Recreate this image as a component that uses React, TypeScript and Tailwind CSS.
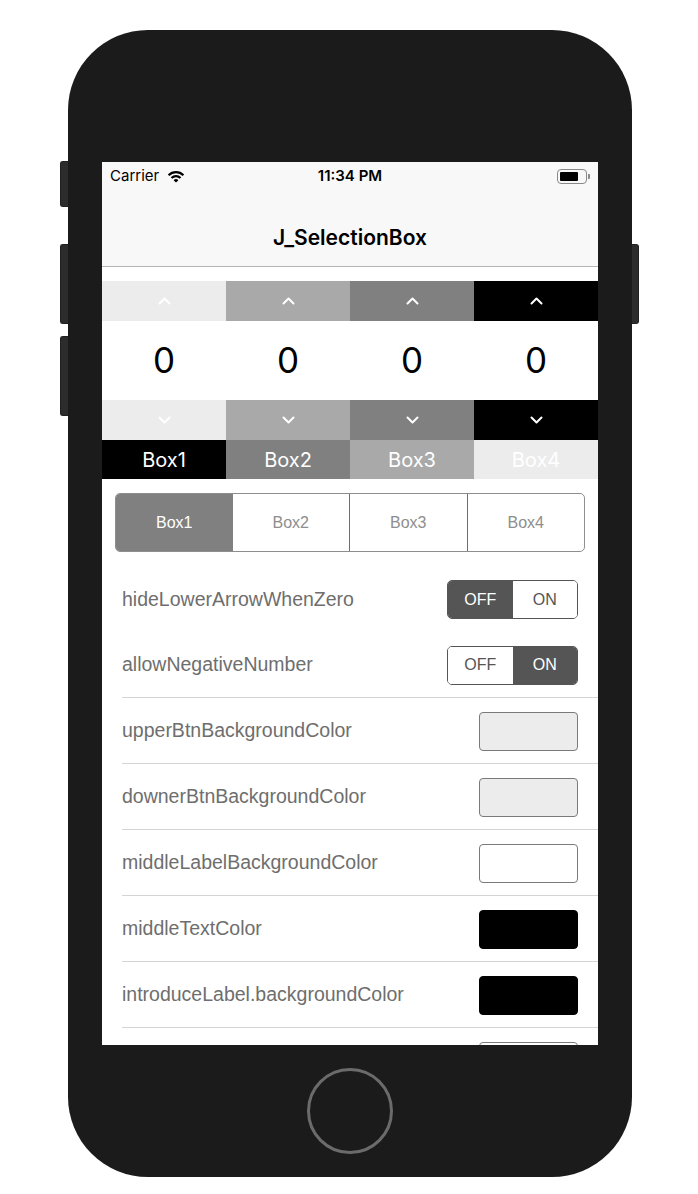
import React from "react";

const cols = [
  { arrow: "bg-[#ececec]", label: "bg-[#000000]" },
  { arrow: "bg-[#a9a9a9]", label: "bg-[#808080]" },
  { arrow: "bg-[#808080]", label: "bg-[#a9a9a9]" },
  { arrow: "bg-[#000000]", label: "bg-[#ececec]" },
];

function Chevron({ up }: { up: boolean }) {
  return (
    <svg width="13" height="8" viewBox="0 0 13 8" fill="none">
      <polyline
        points={up ? "1.5,6.5 6.5,1.5 11.5,6.5" : "1.5,1.5 6.5,6.5 11.5,1.5"}
        stroke="white"
        strokeWidth="2"
        strokeLinecap="round"
        strokeLinejoin="round"
      />
    </svg>
  );
}

function Wifi() {
  return (
    <svg width="18" height="13" viewBox="0 0 18 13">
      <path d="M1.6 5.2 A10.4 10.4 0 0 1 16.4 5.2" stroke="black" strokeWidth="2.2" fill="none" />
      <path d="M4.5 8 A6.4 6.4 0 0 1 13.5 8" stroke="black" strokeWidth="2.2" fill="none" />
      <path d="M9 12.6 L6.6 10.2 A3.4 3.4 0 0 1 11.4 10.2 Z" fill="black" />
    </svg>
  );
}

function Battery() {
  return (
    <div className="flex items-center">
      <div className="w-[30px] h-[15px] rounded-[4px] border border-[#8a8a8a] p-[2px]">
        <div className="w-[18px] h-full bg-black rounded-[1px]" />
      </div>
      <div className="w-[2px] h-[5px] bg-[#8a8a8a] rounded-r-[1px] ml-[1px]" />
    </div>
  );
}

function Toggle({ on }: { on: boolean }) {
  return (
    <div className="w-[131px] h-[39px] rounded-[5px] border border-[#555555] flex overflow-hidden font-['Liberation_Sans',sans-serif] text-[16px]">
      <div className={`flex-1 flex items-center justify-center ${!on ? "bg-[#555555] text-white" : "bg-white text-[#555555]"}`}>OFF</div>
      <div className={`flex-1 flex items-center justify-center ${on ? "bg-[#555555] text-white" : "bg-white text-[#555555]"}`}>ON</div>
    </div>
  );
}

const colorRows = [
  { label: "upperBtnBackgroundColor", sw: "bg-[#ececec] border-[#7a7a7a]" },
  { label: "downerBtnBackgroundColor", sw: "bg-[#ececec] border-[#7a7a7a]" },
  { label: "middleLabelBackgroundColor", sw: "bg-white border-[#7a7a7a]" },
  { label: "middleTextColor", sw: "bg-black border-black" },
  { label: "introduceLabel.backgroundColor", sw: "bg-black border-black" },
  { label: "", sw: "bg-white border-[#7a7a7a]" },
];

export default function App() {
  return (
    <div className="w-[698px] h-[1194px] bg-white pt-[30px] pl-[68px]">
      <div className="relative w-[564px] h-[1147px] rounded-[80px] bg-[#1b1b1b] flex flex-col items-center pt-[132px]">
        <div className="absolute left-[-8px] top-[131px] w-[8px] h-[46px] rounded-l-[3px] bg-[#2c2c2c] border border-r-0 border-[#202020]" />
        <div className="absolute left-[-8px] top-[214px] w-[8px] h-[80px] rounded-l-[3px] bg-[#2c2c2c] border border-r-0 border-[#202020]" />
        <div className="absolute left-[-8px] top-[306px] w-[8px] h-[80px] rounded-l-[3px] bg-[#2c2c2c] border border-r-0 border-[#202020]" />
        <div className="absolute right-[-7px] top-[214px] w-[7px] h-[80px] rounded-r-[3px] bg-[#2c2c2c] border border-l-0 border-[#202020]" />

        <div className="w-[496px] h-[883px] bg-white overflow-hidden flex flex-col">
          {/* nav */}
          <div className="h-[105px] bg-[#f8f8f8] border-b border-[#b4b4b4] flex flex-col shrink-0">
            <div className="h-[28px] flex items-center px-[8px] font-['Inter',sans-serif] text-[15px] text-black relative">
              <div className="flex items-center gap-[8px] w-[160px]">
                <span>Carrier</span>
                <Wifi />
              </div>
              <div className="flex-1 text-center font-semibold">11:34 PM</div>
              <div className="w-[160px] flex justify-end">
                <Battery />
              </div>
            </div>
            <div className="h-[76px] pt-[19px] flex items-center justify-center font-['Inter',sans-serif] font-semibold text-[21px] text-black">
              J_SelectionBox
            </div>
          </div>

          {/* boxes */}
          <div className="mt-[14px] grid grid-cols-4 shrink-0">
            {cols.map((c, i) => (
              <div key={i} className="flex flex-col">
                <div className={`h-[40px] flex items-center justify-center ${c.arrow}`}>
                  <Chevron up />
                </div>
                <div className="h-[79px] flex items-center justify-center bg-white font-['Inter',sans-serif] text-[35px] text-black">
                  0
                </div>
                <div className={`h-[40px] flex items-center justify-center ${c.arrow}`}>
                  <Chevron up={false} />
                </div>
                <div className={`h-[39px] flex items-center justify-center text-white font-['Inter',sans-serif] text-[20px] ${c.label}`}>
                  Box{i + 1}
                </div>
              </div>
            ))}
          </div>

          {/* segmented */}
          <div className="mt-[14px] mx-[13px] h-[59px] rounded-[5px] border border-[#8e8e8e] flex overflow-hidden shrink-0 font-['Liberation_Sans',sans-serif] text-[16px]">
            <div className="flex-1 flex items-center justify-center bg-[#808080] text-white">Box1</div>
            <div className="flex-1 flex items-center justify-center text-[#8e8e8e]">Box2</div>
            <div className="flex-1 flex items-center justify-center text-[#8e8e8e] border-l border-[#6e6e6e]">Box3</div>
            <div className="flex-1 flex items-center justify-center text-[#8e8e8e] border-l border-[#6e6e6e]">Box4</div>
          </div>

          {/* settings */}
          <div className="mt-[14px] ml-[20px] flex flex-col font-['Liberation_Sans',sans-serif] text-[19.5px] text-[#6e6e6e]">
            <div className="h-[66px] flex items-center justify-between pr-[20px] pt-[1px]">
              <span>hideLowerArrowWhenZero</span>
              <Toggle on={false} />
            </div>
            <div className="h-[66px] flex items-center justify-between pr-[20px] pt-[1px] border-b border-[#d4d4d4]">
              <span>allowNegativeNumber</span>
              <Toggle on />
            </div>
            {colorRows.map((r, i) => (
              <div key={i} className="h-[66px] flex items-center justify-between pr-[20px] pt-[1px] border-b border-[#d4d4d4] shrink-0">
                <span>{r.label}</span>
                <div className={`w-[99px] h-[39px] rounded-[4px] border ${r.sw}`} />
              </div>
            ))}
          </div>
        </div>

        <div className="mt-[23px] w-[86px] h-[86px] rounded-full border-[3px] border-[#6b6b6b]" />
      </div>
    </div>
  );
}
